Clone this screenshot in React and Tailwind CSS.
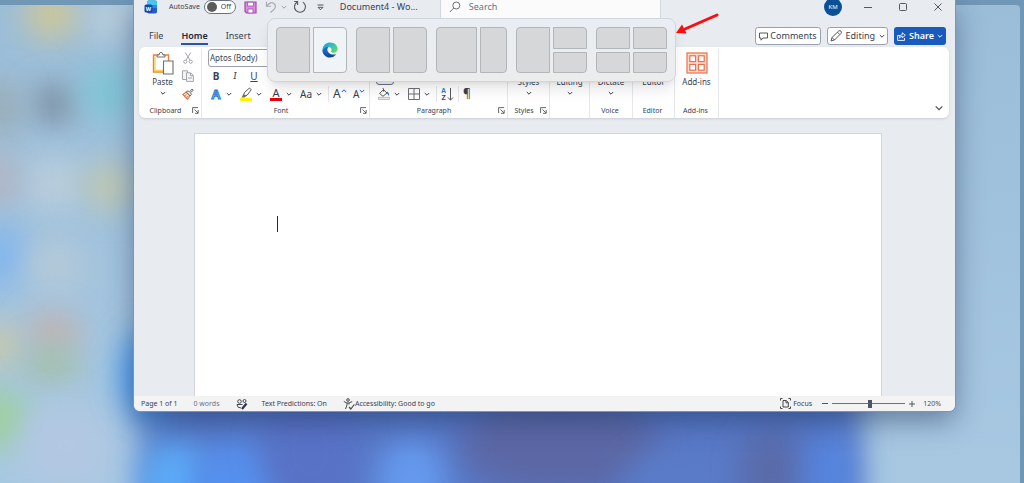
import React, { useState } from 'react';
import clsx from 'clsx';

// blurred desktop icons
const blobs = [
  { cx: 52, cy: 15, rx: 28, ry: 24, fill: '#cfc798' },
  { cx: 112, cy: 18, rx: 26, ry: 24, fill: '#b9cddc' },
  { cx: 54, cy: 104, rx: 22, ry: 20, fill: '#7b8d9e' },
  { cx: 2, cy: 108, rx: 18, ry: 30, fill: '#98aab4' },
  { cx: 108, cy: 92, rx: 28, ry: 28, fill: '#7fc4d6' },
  { cx: 54, cy: 184, rx: 30, ry: 28, fill: '#b9cddc' },
  { cx: 110, cy: 186, rx: 26, ry: 24, fill: '#bfc7b0' },
  { cx: 0, cy: 180, rx: 16, ry: 30, fill: '#b6b4be' },
  { cx: 2, cy: 256, rx: 24, ry: 32, fill: '#82b6ee' },
  { cx: 56, cy: 266, rx: 28, ry: 28, fill: '#b4c9d8' },
  { cx: 0, cy: 346, rx: 20, ry: 22, fill: '#ccc9a4' },
  { cx: 54, cy: 332, rx: 26, ry: 18, fill: '#c6b0ac' },
  { cx: 52, cy: 364, rx: 28, ry: 20, fill: '#a4c0aa' },
  { cx: 2, cy: 420, rx: 26, ry: 30, fill: '#9ed09c' },
  { cx: 66, cy: 446, rx: 46, ry: 44, fill: '#b2c8e2' },
];

// blue flower behind the window
const petals = [
  { cx: 150, cy: 375, rx: 30, ry: 46, fill: '#4c9cf0' },
  { cx: 175, cy: 480, rx: 36, ry: 40, fill: '#5cabf8' },
  { cx: 240, cy: 480, rx: 50, ry: 40, fill: '#5590ee' },
  { cx: 310, cy: 450, rx: 50, ry: 60, fill: '#5872c6' },
  { cx: 412, cy: 482, rx: 36, ry: 44, fill: '#659aee' },
  { cx: 560, cy: 445, rx: 100, ry: 50, fill: '#5b68a6' },
  { cx: 680, cy: 480, rx: 56, ry: 30, fill: '#5a7cc8' },
  { cx: 770, cy: 470, rx: 30, ry: 40, fill: '#5a6aa8' },
  { cx: 832, cy: 475, rx: 22, ry: 50, fill: '#5586e0' },
];

function Wallpaper() {
  return (
    <svg
      className="absolute inset-0 h-full w-full"
      viewBox="0 0 1024 483"
      preserveAspectRatio="none"
      aria-hidden="true"
    >
      <defs>
        <filter id="soft" x="-100%" y="-100%" width="300%" height="300%">
          <feGaussianBlur stdDeviation="15" />
        </filter>
        <linearGradient id="sky" x1="0" y1="0" x2="0" y2="1">
          <stop offset="0" stopColor="#9bbdd8" />
          <stop offset="1" stopColor="#a8c8e2" />
        </linearGradient>
      </defs>
      <rect width="1024" height="483" fill="#7197b6" />
      <path d="M0 5H1016Q1020 5 1020 9V483H0Z" fill="url(#sky)" />
      {blobs.map((b, i) => (
        <ellipse key={i} {...b} filter="url(#soft)" />
      ))}
      <rect x="142" y="360" width="718" height="180" rx="20" fill="#5878c6" filter="url(#soft)" />
      {petals.map((p, i) => (
        <ellipse key={i} {...p} filter="url(#soft)" />
      ))}
      <rect width="1024" height="5" fill="#7197b6" />
    </svg>
  );
}

function Chevron({ className }) {
  return (
    <svg viewBox="0 0 6 6" className={clsx('h-1.5 w-1.5 shrink-0', className)} aria-hidden="true">
      <path d="M0.8 2 3 4.2 5.2 2" fill="none" stroke="currentColor" strokeWidth="1" />
    </svg>
  );
}

function WordLogo() {
  return (
    <svg viewBox="0 0 14 14" className="h-3.5 w-3.5" aria-hidden="true">
      <rect x="3" y="0.5" width="10" height="13" rx="1.8" fill="#1f5fd0" />
      <path d="M3 5V2.300Q3 .5 4.800 .5H11.200Q13 .5 13 2.300V5Z" fill="#3ccbf4" />
      <path d="M3 5H13V8H3Z" fill="#2a8de8" />
      <rect x="0.500" y="4.500" width="8" height="8" rx="1.600" fill="#1447a8" />
      <text x="4.500" y="10.500" fontSize="5.500" fontWeight="700" fill="#fff" textAnchor="middle" fontFamily="Noto Sans">
        W
      </text>
    </svg>
  );
}

function SaveIcon() {
  return (
    <svg viewBox="0 0 13 13" className="h-[13px] w-[13px]" aria-hidden="true">
      <path d="M1 1H12V12H2.500L1 10.500Z" fill="#d88fdc" stroke="#a846b0" strokeWidth="1.200" />
      <path d="M3.500 1.200H9.500V5H3.500Z" fill="#fff" stroke="#a846b0" strokeWidth=".8" />
      <path d="M4 8H9V12H4Z" fill="#fff" stroke="#a846b0" strokeWidth=".8" />
    </svg>
  );
}

function UndoIcon() {
  return (
    <svg viewBox="0 0 12 12" className="h-3 w-3" fill="none" stroke="#a3a6aa" strokeWidth="1.100" aria-hidden="true">
      <path d="M1.500 .8V5.300H6" />
      <path d="M1.800 5C4 1.500 7.500 .9 9.300 2.800S10.500 7 9 8.300L5.500 11.500" />
    </svg>
  );
}

function RedoIcon() {
  return (
    <svg viewBox="0 0 14 14" className="h-3.5 w-3.5" fill="none" stroke="#55585c" strokeWidth="1.100" aria-hidden="true">
      <path d="M4 2.200A5.500 5.500 0 1 0 9.800 2.100" />
      <path d="M1.200 1.500H4.600V5" />
    </svg>
  );
}

function PasteIcon() {
  return (
    <svg viewBox="0 0 22 24" className="h-6 w-[22px]" fill="none" aria-hidden="true">
      <path d="M1.500 4H16.500V21H1.500Z" fill="#fff" stroke="#e8843c" strokeWidth="1.400" />
      <path d="M3 5.500V19.500H11" stroke="#f7d34a" strokeWidth="1.400" />
      <path d="M5 6V4H7Q7.300 1.300 9 1.300T11 4H13V6Z" fill="#fff" stroke="#6c6f73" />
      <path d="M11.500 10H21V23H11.500Z" fill="#fff" stroke="#6c6f73" strokeWidth="1.100" />
    </svg>
  );
}

function CutIcon() {
  return (
    <svg viewBox="0 0 12 12" className="h-3 w-3" fill="none" stroke="#a3a6aa" aria-hidden="true">
      <path d="M3.300 .5 8 8.200M8.700 .5 4 8.200" />
      <circle cx="3.300" cy="9.700" r="1.600" />
      <circle cx="8.700" cy="9.700" r="1.600" />
    </svg>
  );
}

function CopyIcon() {
  return (
    <svg viewBox="0 0 12 12" className="h-3 w-3" fill="#f4f4f4" stroke="#a3a6aa" aria-hidden="true">
      <path d="M.5 .8H5.500V9.500H.5Z" />
      <path d="M4.500 2.800H8.700L11.400 5.500V11.400H4.500Z" />
      <path d="M8.500 3V5.700H11.200M6 8H10" fill="none" />
    </svg>
  );
}

function PainterIcon() {
  return (
    <svg viewBox="0 0 12 12" className="h-3 w-3" aria-hidden="true">
      <path d="M.8 6.500 4.300 4 8 7.800 5.500 11.300Z" fill="#fbe3cf" stroke="#e8743c" strokeWidth="1.100" />
      <path d="M2 8.500 4.500 6.500M4 10 6 8" stroke="#e8743c" />
      <path d="M4.300 3.800 6 2.800 7.500 4 10 1 11.300 2.200 8.300 4.800 9.500 6.200 8.200 8Z" fill="#fff" stroke="#55585c" strokeWidth=".9" />
    </svg>
  );
}

function HighlightIcon() {
  return (
    <svg viewBox="0 0 12 14" className="h-3.5 w-3" aria-hidden="true">
      <rect x="0" y="11" width="12" height="3" rx=".8" fill="#fff200" />
      <path d="M3.500 8.500 4.500 5.500 9.500 1 11.200 2.800 7 8.300Z" fill="#fff" stroke="#55585c" />
      <path d="M1.500 10.500 3.300 7 6.300 9.200 4.500 10.500Z" fill="#6c6f73" />
    </svg>
  );
}

function BucketIcon() {
  return (
    <svg viewBox="0 0 12 12" className="h-3 w-3" aria-hidden="true">
      <rect x=".4" y="9.200" width="11.200" height="2.300" fill="#e6e6e6" stroke="#a3a6aa" strokeWidth=".6" />
      <path d="M1.500 5.500 5.500 1.700 9 5 5 8.300Z" fill="#fff" stroke="#55585c" />
      <path d="M5.500 3.500V1Q5.500 .3 4.700 .5" fill="none" stroke="#55585c" />
      <path d="M9 3.500Q11.500 4.500 11 8L9 5.500Z" fill="#2b7cd3" />
    </svg>
  );
}

function BordersIcon() {
  return (
    <svg viewBox="0 0 12 12" className="h-3 w-3" fill="none" stroke="#6c6f73" aria-hidden="true">
      <path d="M.5 .5H11.500V11.500H.5ZM6 .5V11.500M.5 6H11.500" />
    </svg>
  );
}

function SortIcon() {
  return (
    <svg viewBox="0 0 13 16" className="h-4 w-[13px]" aria-hidden="true" fontFamily="Liberation Sans" fontWeight="700">
      <text x="0" y="6.500" fontSize="7" fill="#2b7cd3">A</text>
      <text x="0.500" y="14.400" fontSize="7" fill="#44474b">Z</text>
      <path d="M9.500 2V14M7 11.500 9.500 14.200 12 11.500" fill="none" stroke="#55585c" />
    </svg>
  );
}

function AddinsIcon() {
  return (
    <svg viewBox="0 0 22 22" className="h-[22px] w-[22px]" fill="none" stroke="#e8704a" strokeWidth="1.200" aria-hidden="true">
      <rect x="1" y="1" width="20" height="20" fill="#fbdccf" />
      <g fill="#fff">
        <rect x="3.800" y="3.800" width="5.800" height="5.800" />
        <rect x="12.400" y="3.800" width="5.800" height="5.800" />
        <rect x="3.800" y="12.400" width="5.800" height="5.800" />
        <rect x="12.400" y="12.400" width="5.800" height="5.800" />
      </g>
    </svg>
  );
}

function LauncherIcon() {
  return (
    <svg viewBox="0 0 7 7" className="h-[7px] w-[7px]" fill="none" stroke="#55585c" strokeWidth=".9" aria-hidden="true">
      <path d="M.6 6V.6H6M2.500 2.500 6 6M6.200 3V6.300H3" />
    </svg>
  );
}

function EdgeLogo() {
  return (
    <svg viewBox="0 0 16 16" className="h-4 w-4" aria-hidden="true">
      <defs>
        <linearGradient id="edgeTop" x1="0" y1="0" x2="1" y2=".6">
          <stop offset="0" stopColor="#2090d8" />
          <stop offset=".5" stopColor="#32b8cc" />
          <stop offset="1" stopColor="#5fd46c" />
        </linearGradient>
        <linearGradient id="edgeBody" x1="0" y1="0" x2="0" y2="1">
          <stop offset="0" stopColor="#1f7fd4" />
          <stop offset="1" stopColor="#10408c" />
        </linearGradient>
      </defs>
      <path d="M.5 7.500C1 3 4.300 .4 8.200 .4c4.300 0 7.400 2.900 7.400 6.300 0 2.400-1.700 4-3.900 4-1.900 0-3-.7-2.500-1.500.9-1.200.5-3.900-2.400-4.200C4 4.700 1.500 5.500 .5 7.500Z" fill="url(#edgeTop)" />
      <path d="M.4 8C1 5.800 3.800 4.400 6.600 4.900 4.900 6 5 8.500 6.300 10.200c1.700 2.300 5.200 3 7.900 1.800C12.800 14.300 10.600 15.600 8 15.600 3.800 15.600.2 12.200.4 8Z" fill="url(#edgeBody)" />
      <path d="M6.600 4.900C3.800 6.500 3.600 11 6.500 13.500 4.500 13 2.800 11 2.800 8.800 2.800 7 4.200 5.200 6.600 4.900Z" fill="#1a62bc" />
    </svg>
  );
}

function TitleBar() {
  const [autoSave, setAutoSave] = useState(false);
  return (
    <header className="flex h-3.5 items-center pl-2.5 text-gray-700">
      <WordLogo />
      <label htmlFor="autosave" className="ml-[11px] text-[7px] leading-3">AutoSave</label>
      <span className="relative ml-1 flex h-3.5 w-8 items-center rounded-full border border-gray-500 bg-white">
        <input
          id="autosave"
          type="checkbox"
          checked={autoSave}
          onChange={(e) => setAutoSave(e.target.checked)}
          className="absolute inset-0 appearance-none"
        />
        <span className="ml-0.5 h-2.5 w-2.5 rounded-full bg-[#5c5c5c]" />
        <span className="ml-1 text-[7px] leading-3">{autoSave ? 'On' : 'Off'}</span>
      </span>
      <button aria-label="Save" className="ml-2"><SaveIcon /></button>
      <button aria-label="Undo" className="ml-2 flex items-center gap-1 text-gray-400">
        <UndoIcon />
        <Chevron />
      </button>
      <button aria-label="Redo" className="ml-1.5"><RedoIcon /></button>
      <button aria-label="Customize toolbar" className="ml-2.5">
        <svg viewBox="0 0 7 7" className="h-[7px] w-[7px]" fill="none" stroke="#55585c" aria-hidden="true">
          <path d="M.5 1H6.500M1 3.300 3.500 5.800 6 3.300Z" />
        </svg>
      </button>
      <h1 className="ml-4 w-[100px] text-[9px] leading-3">Document4 - Wo...</h1>
      <label className="flex h-6 w-[221px] items-center gap-2 border border-gray-300 bg-[#fbfbfb] pl-2">
        <svg viewBox="0 0 12 12" className="h-3 w-3" fill="none" stroke="#6c6f73" aria-hidden="true">
          <circle cx="7.300" cy="4.500" r="3.500" />
          <path d="M4.800 7 .8 11" />
        </svg>
        <input
          type="text"
          aria-label="Search"
          placeholder="Search"
          className="min-w-0 flex-1 bg-transparent text-[9px] leading-3 outline-none placeholder:text-gray-500"
        />
      </label>
      <button className="mr-2 ml-auto h-[18px] w-[18px] rounded-full bg-[#0b4f94] text-[6px] text-white">KM</button>
      <button aria-label="Minimize" className="flex w-[35px] justify-center">
        <svg viewBox="0 0 8 8" className="h-2 w-2" stroke="#55585c" aria-hidden="true"><path d="M0 4.500H8" /></svg>
      </button>
      <button aria-label="Maximize" className="flex w-[35px] justify-center">
        <svg viewBox="0 0 8 8" className="h-2 w-2" fill="none" stroke="#55585c" aria-hidden="true">
          <rect x=".5" y=".5" width="7" height="7" rx="1" />
        </svg>
      </button>
      <button aria-label="Close" className="flex w-[35px] justify-center">
        <svg viewBox="0 0 8 8" className="h-2 w-2" stroke="#55585c" aria-hidden="true"><path d="M.5 .5 7.500 7.500M7.500 .5 .5 7.500" /></svg>
      </button>
    </header>
  );
}

function TabRow() {
  const tabs = ['File', 'Home', 'Insert', 'Draw'];
  return (
    <div className="mt-[13px] flex items-start pr-[9px] pb-0.5 text-[9px] text-gray-700">
      <nav className="flex gap-[18px] pl-[15px]">
        {tabs.map((tab) => (
          <a
            key={tab}
            href="#"
            className={clsx(
              'h-[18px] border-b-2 leading-[18px]',
              tab === 'Home' ? 'border-[#2556a8] font-semibold text-gray-800' : 'border-transparent'
            )}
          >
            {tab}
          </a>
        ))}
      </nav>
      <div className="ml-auto flex gap-1.5 leading-3 whitespace-nowrap">
        <button className="flex h-[18px] items-center gap-0.5 rounded-[3px] border border-gray-400 bg-white px-[3px]">
          <svg viewBox="0 0 9 9" className="h-[9px] w-[9px]" fill="none" stroke="#55585c" aria-hidden="true">
            <path d="M.5 1H8.500V6H4L2 8.200V6H.5Z" />
          </svg>
          Comments
        </button>
        <button className="flex h-[18px] items-center gap-1 rounded-[3px] border border-gray-400 bg-white px-0.5">
          <svg viewBox="0 0 12 12" className="h-3 w-3" fill="none" stroke="#55585c" aria-hidden="true">
            <path d="M1 11 2 7.500 8.800 .9Q10 .2 11 1.200T11.200 3.200L4.500 10ZM7.500 2.200 9.800 4.500M2 7.500 4.500 10" />
          </svg>
          Editing
          <Chevron />
        </button>
        <button className="flex h-[18px] items-center gap-[3px] rounded-[3px] bg-[#185abd] px-[3px] font-semibold text-white">
          <svg viewBox="0 0 9 9" className="h-[9px] w-[9px]" fill="none" stroke="currentColor" strokeWidth=".9" aria-hidden="true">
            <path d="M3 3.500H.6V8.400H7.500V6M5.300 .8 8.300 3.300 5.300 5.800V4.300Q3.300 4.300 2.300 6.200 2.500 2.700 5.300 2.500Z" />
          </svg>
          Share
          <Chevron />
        </button>
      </div>
    </div>
  );
}

function Group({ label, launcher, className, children }) {
  return (
    <section className={clsx('flex shrink-0 flex-col', className)}>
      <div className="flex h-[54px] border-r border-gray-200">{children}</div>
      <div className="flex h-[15px] items-center border-r border-gray-200 pr-0.5 text-[7px] leading-3">
        <span className="flex-1 text-center">{label}</span>
        {launcher && <button aria-label={`${label} settings`}><LauncherIcon /></button>}
      </div>
    </section>
  );
}

function BigButton({ icon, label, menu, className }) {
  return (
    <button className={clsx('flex flex-col items-center text-[8px]', className)}>
      <span className="flex h-[27px] items-center">{icon}</span>
      <span className="leading-3">{label}</span>
      {menu && <Chevron className="mt-0.5" />}
    </button>
  );
}

function MenuButton({ label, children }) {
  return (
    <button aria-label={label} className="flex items-center gap-1">
      <span className="flex h-3.5 w-3 items-center justify-center">{children}</span>
      <Chevron />
    </button>
  );
}

function Divider() {
  return <span className="h-4 w-px bg-gray-200" />;
}

function Ribbon() {
  return (
    <div className="mr-1.5 ml-[5px] flex rounded-md bg-white pt-0.5 text-gray-700 shadow">
      <Group label="Clipboard" launcher className="w-[63px]">
        <BigButton icon={<PasteIcon />} label="Paste" menu className="ml-1 w-[39px]" />
        <div className="flex flex-col">
          <button aria-label="Cut" className="flex h-[18px] items-center"><CutIcon /></button>
          <button aria-label="Copy" className="flex h-[18px] items-center"><CopyIcon /></button>
          <button aria-label="Format Painter" className="flex h-[18px] items-center"><PainterIcon /></button>
        </div>
      </Group>

      <Group label="Font" launcher className="w-[168px]">
        <div className="flex flex-col pl-1.5">
          <select
            aria-label="Font name"
            className="h-[18px] w-24 appearance-none rounded-[3px] border border-gray-400 px-px text-[8px] leading-3"
          >
            <option>Aptos (Body)</option>
          </select>
          <div className="flex h-[18px] items-center gap-[7px] pl-0.5 text-[10px] leading-3">
            <button className="w-3 font-bold">B</button>
            <button className="w-3 font-serif italic">I</button>
            <button className="w-3 underline">U</button>
            <Chevron />
          </div>
          <div className="flex h-[18px] items-center gap-2 pl-0.5">
            <MenuButton label="Text effects">
              <svg viewBox="0 0 12 16" className="h-4 w-3 shrink-0" aria-hidden="true">
                <text x="6" y="12.500" fontSize="13" fontWeight="700" fontFamily="Liberation Sans" textAnchor="middle" fill="#d6e9fb" stroke="#2b7cd3" strokeWidth="1.100">A</text>
              </svg>
            </MenuButton>
            <MenuButton label="Highlight color"><HighlightIcon /></MenuButton>
            <MenuButton label="Font color">
              <span className="w-3 border-b-[3px] border-red-600 text-[11px] leading-[11px]">A</span>
            </MenuButton>
            <MenuButton label="Change case"><span className="text-[10px] leading-3">Aa</span></MenuButton>
            <span className="-ml-0.5 flex items-center gap-1">
              <Divider />
              <button aria-label="Grow font" className="flex w-4 text-[12px] leading-3">
                A<Chevron className="rotate-180 text-blue-600" />
              </button>
              <button aria-label="Shrink font" className="flex w-4 text-[10px] leading-3">
                A<Chevron className="text-blue-600" />
              </button>
            </span>
          </div>
        </div>
      </Group>

      <Group label="Paragraph" launcher className="w-[138px]">
        <div className="flex flex-col pl-1.5">
          <span className="h-[18px]" />
          <button aria-label="Align left" className="h-[18px] w-[18px] rounded-[3px] border border-gray-500 bg-gray-100" />
          <div className="flex h-[18px] items-center gap-2 pl-0.5">
            <MenuButton label="Shading"><BucketIcon /></MenuButton>
            <MenuButton label="Borders"><BordersIcon /></MenuButton>
            <span className="-ml-0.5 flex items-center gap-1">
              <Divider />
              <button aria-label="Sort"><SortIcon /></button>
              <Divider />
              <button aria-label="Show marks" className="text-[12px] leading-3">¶</button>
            </span>
          </div>
        </div>
      </Group>

      <Group label="Styles" launcher className="w-[42px]">
        <BigButton label="Styles" menu className="w-full" />
      </Group>
      <Group className="w-10">
        <BigButton label="Editing" menu className="w-full" />
      </Group>
      <Group label="Voice" className="w-[43px]">
        <BigButton label="Dictate" menu className="w-full" />
      </Group>
      <Group label="Editor" className="w-[42px]">
        <BigButton label="Editor" className="w-full" />
      </Group>
      <Group label="Add-ins" className="w-11">
        <BigButton icon={<AddinsIcon />} label="Add-ins" className="w-full" />
      </Group>
      <button aria-label="Collapse ribbon" className="mr-1.5 mb-1.5 ml-auto self-end">
        <svg viewBox="0 0 8 8" className="h-2 w-2" fill="none" stroke="#44474b" strokeWidth="1.100" aria-hidden="true">
          <path d="M.7 2.300 4 5.600 7.300 2.300" />
        </svg>
      </button>
    </div>
  );
}

function Tile({ className, label, children }) {
  return (
    <button
      aria-label={label}
      className={clsx(
        'flex items-center justify-center border border-[#b2b6b9]',
        children ? 'bg-[#f1f4f7]' : 'bg-[#d5d7d9]',
        className
      )}
    >
      {children}
    </button>
  );
}

function SnapLayouts() {
  return (
    <div className="absolute top-[18px] left-[133px] z-10 flex gap-[9px] rounded-lg border border-gray-300 bg-linear-to-b from-[#e9eef4] to-[#ececec] p-2 shadow-lg">
      <div className="grid h-[46px] w-[71px] grid-cols-2 gap-[3px]">
        <Tile label="Left half" className="rounded-l" />
        <Tile label="Right half, Edge" className="rounded-r"><EdgeLogo /></Tile>
      </div>
      <div className="grid h-[46px] w-[71px] grid-cols-2 gap-[3px]">
        <Tile label="Left half" className="rounded-l" />
        <Tile label="Right half" className="rounded-r" />
      </div>
      <div className="grid h-[46px] w-[71px] grid-cols-[3fr_2fr] gap-[3px]">
        <Tile label="Left wide" className="rounded-l" />
        <Tile label="Right narrow" className="rounded-r" />
      </div>
      <div className="grid h-[46px] w-[71px] grid-cols-2 grid-rows-2 gap-[3px]">
        <Tile label="Left half" className="row-span-2 rounded-l" />
        <Tile label="Top right" className="rounded-tr" />
        <Tile label="Bottom right" className="rounded-br" />
      </div>
      <div className="grid h-[46px] w-[71px] grid-cols-2 grid-rows-2 gap-[3px]">
        <Tile label="Top left" className="rounded-tl" />
        <Tile label="Top right" className="rounded-tr" />
        <Tile label="Bottom left" className="rounded-bl" />
        <Tile label="Bottom right" className="rounded-br" />
      </div>
    </div>
  );
}

function Arrow() {
  return (
    <svg viewBox="0 0 44 22" className="absolute top-[13px] left-[541px] z-20 h-[22px] w-11" aria-hidden="true">
      <path d="M42 2 10 16" stroke="#fb0d0d" strokeWidth="3" strokeLinecap="round" />
      <path d="M1 20 7 11.500 11.500 20.500Z" fill="#fb0d0d" />
    </svg>
  );
}

function StatusBar() {
  const [zoom, setZoom] = useState(52);
  return (
    <footer className="flex h-[15px] items-center rounded-b-md bg-[#f3f3f3] pr-3.5 pl-[7px] text-[7px] leading-3 whitespace-nowrap text-gray-700">
      <span>Page 1 of 1</span>
      <span className="ml-4 text-gray-500">0 words</span>
      <svg viewBox="0 0 12 12" className="ml-4 h-3 w-3" fill="none" stroke="#44474b" aria-hidden="true">
        <circle cx="3.500" cy="3.500" r="1.800" />
        <circle cx="8.500" cy="3" r="1.500" />
        <path d="M1 6.500H6.500M1 6.500Q1 10 5 10" />
        <path d="M6 11 10.500 5.500" strokeWidth="2.200" stroke="#2c3550" />
      </svg>
      <span className="ml-3.5">Text Predictions: On</span>
      <svg viewBox="0 0 12 12" className="ml-4 h-3 w-3" fill="none" stroke="#44474b" aria-hidden="true">
        <circle cx="5" cy="2" r="1.300" />
        <path d="M.8 3.500 4 5V7L2.500 11M9.200 3.500 6 5V6.500M4 5H6" />
        <path d="M6 9 7.800 11 11.300 6.500" strokeWidth="1.200" />
      </svg>
      <span>Accessibility: Good to go</span>
      <button className="ml-auto flex items-center gap-0.5">
        <svg viewBox="0 0 11 11" className="h-[11px] w-[11px]" fill="none" stroke="#44474b" aria-hidden="true">
          <path d="M.5 2.500V.5H2.500M8.500 .5H10.500V2.500M10.500 8.500V10.500H8.500M2.500 10.500H.5V8.500" />
          <path d="M3 2.500H6.300L8.300 4.500V9H3ZM6 2.500V4.800H8.300" />
        </svg>
        Focus
      </button>
      <button aria-label="Zoom out" className="ml-2.5 h-px w-1.5 bg-gray-600" />
      <input
        type="range"
        aria-label="Zoom"
        value={zoom}
        onChange={(e) => setZoom(Number(e.target.value))}
        className="ml-1 h-px w-[73px] appearance-none bg-gray-500 [&::-webkit-slider-thumb]:h-2 [&::-webkit-slider-thumb]:w-1 [&::-webkit-slider-thumb]:appearance-none [&::-webkit-slider-thumb]:bg-gray-600"
      />
      <button aria-label="Zoom in" className="ml-1">
        <svg viewBox="0 0 6 6" className="h-1.5 w-1.5" stroke="#55585c" aria-hidden="true"><path d="M0 3H6M3 0V6" /></svg>
      </button>
      <span className="ml-2 text-gray-600">120%</span>
    </footer>
  );
}

export default function App() {
  return (
    <div className="relative flex min-h-screen flex-col overflow-hidden pr-[69px] pb-[72px] pl-[134px] font-['Noto_Sans','Open_Sans',sans-serif]">
      <Wallpaper />
      <div className="relative flex flex-1 flex-col rounded-b-md bg-[#e8ebf0] shadow-[0_0_0_1px_#6f98c8,0_10px_28px_rgba(20,40,80,0.45)]">
        <TitleBar />
        <TabRow />
        <Ribbon />
        <main className="mt-[15px] mr-[73px] ml-[60px] flex-1 border border-b-0 border-gray-300 bg-white">
          <div className="mt-[82px] ml-[82px] h-4 w-px bg-gray-800" />
        </main>
        <StatusBar />
        <SnapLayouts />
        <Arrow />
      </div>
    </div>
  );
}
